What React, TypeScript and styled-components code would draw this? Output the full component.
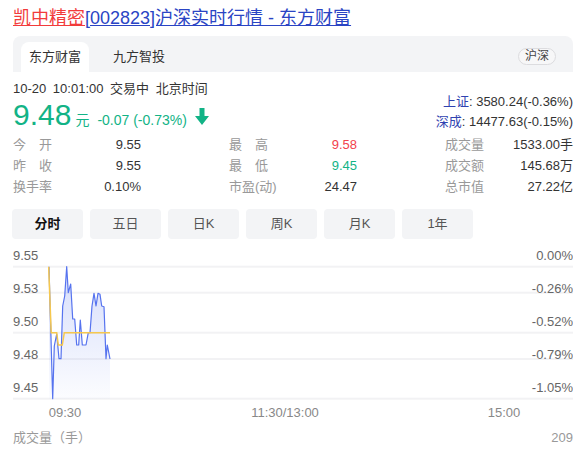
import { Fragment } from "react";
import styled, { createGlobalStyle } from "styled-components";

const GlobalStyle = createGlobalStyle`
  html, body {
    margin: 0;
    padding: 0;
    background: #fff;
  }
  body {
    font-family: "Liberation Sans", "Noto Sans CJK SC", sans-serif;
    color: #333;
  }
`;

const GREEN = "#12b386";
const RED = "#f2424c";

const Page = styled.div`
  width: 588px;
  height: 450px;
  box-sizing: border-box;
  padding: 6px 15px 0 13px;
  overflow: hidden;
`;

const Title = styled.div`
  font-size: 18px;
  line-height: 24px;
  white-space: nowrap;
`;

const TitleLink = styled.a<{ $color: string }>`
  color: ${({ $color }) => $color};
  text-decoration: underline;
`;

const TabPanel = styled.div`
  margin-top: 6px;
  height: 36px;
  background: #f3f4f6;
  border-radius: 8px 8px 0 0;
  display: flex;
  align-items: flex-end;
  padding: 0 17px 0 8px;
  gap: 16px;
`;

const SourceTab = styled.div<{ $active?: boolean }>`
  height: 30px;
  line-height: 30px;
  padding: 0 8px;
  font-size: 13px;
  color: #333;
  border-radius: 8px 8px 0 0;
  background: ${({ $active }) => ($active ? "#fff" : "transparent")};
`;

const Badge = styled.span`
  margin-left: auto;
  align-self: center;
  margin-top: 5px;
  height: 17px;
  line-height: 15px;
  box-sizing: border-box;
  padding: 0 6px;
  font-size: 12px;
  color: #444;
  border: 1px solid #dcdcdf;
  border-radius: 9px;
  background: #f7f7f8;
`;

const QuoteTop = styled.div`
  margin-top: 9px;
  display: flex;
  justify-content: space-between;
`;

const QuoteLeft = styled.div`
  display: flex;
  flex-direction: column;
`;

const InfoLine = styled.div`
  font-size: 13px;
  line-height: 15px;
  color: #333;
  word-spacing: 3px;
`;

const PriceRow = styled.div`
  display: flex;
  align-items: baseline;
  height: 33px;
  margin-top: 2px;
  color: ${GREEN};
`;

const BigPrice = styled.span`
  font-size: 30px;
  line-height: 33px;
  margin-right: 4px;
`;

const Unit = styled.span`
  font-size: 14px;
  margin-right: 8px;
`;

const Change = styled.span`
  font-size: 14px;
  margin-right: 8px;
`;

const ArrowIcon = styled.svg`
  align-self: center;
  margin-top: 4px;
`;

const IndexCol = styled.div`
  align-self: flex-end;
  text-align: right;
  font-size: 13px;
  line-height: 20px;
  margin-bottom: -1px;
`;

const IndexName = styled.span`
  color: #2f42b0;
`;

const StatsGrid = styled.div`
  margin-top: 3px;
  display: grid;
  grid-template-columns: 128px 1fr 128px 1fr 128px;
  font-size: 13px;
  line-height: 21px;
`;

const StatCell = styled.div<{ $col: number }>`
  grid-column: ${({ $col }) => $col};
  display: flex;
  justify-content: space-between;
`;

const StatLabel = styled.span`
  color: #999;
`;

const StatValue = styled.span<{ $color?: string }>`
  color: ${({ $color }) => $color || "#333"};
`;

const PeriodBar = styled.div`
  margin: 12px 0 0 -1px;
  display: flex;
  gap: 7px;
`;

const PeriodTab = styled.div<{ $active?: boolean }>`
  width: 71px;
  height: 30px;
  line-height: 30px;
  text-align: center;
  font-size: 13px;
  border-radius: 4px;
  background: #f3f4f6;
  color: ${({ $active }) => ($active ? "#111" : "#555")};
  font-weight: ${({ $active }) => ($active ? 700 : 400)};
`;

const Chart = styled.svg`
  display: block;
  margin-top: 2px;
  font-family: "Liberation Sans", sans-serif;
  font-size: 13px;
`;

const VolumeRow = styled.div`
  margin-top: 8px;
  display: flex;
  justify-content: space-between;
  font-size: 13px;
  line-height: 18px;
  color: #999;
`;

type Stat = { label: string; value: string; color?: string };

const stats: Stat[][] = [
  [
    { label: "今　开", value: "9.55" },
    { label: "最　高", value: "9.58", color: RED },
    { label: "成交量", value: "1533.00手" },
  ],
  [
    { label: "昨　收", value: "9.55" },
    { label: "最　低", value: "9.45", color: GREEN },
    { label: "成交额", value: "145.68万" },
  ],
  [
    { label: "换手率", value: "0.10%" },
    { label: "市盈(动)", value: "24.47" },
    { label: "总市值", value: "27.22亿" },
  ],
];

const periods = ["分时", "五日", "日K", "周K", "月K", "1年"];

const gridY = [25.7, 51.7, 91.7, 118, 157.7];
const labelY = [18.7, 51.7, 84.7, 117.7, 150.7];
const leftLabels = ["9.55", "9.53", "9.50", "9.48", "9.45"];
const rightLabels = ["0.00%", "-0.26%", "-0.52%", "-0.79%", "-1.05%"];

const pricePts: [number, number][] = [
  [36, 25.7], [39.7, 157.7], [41.3, 105], [43.7, 93], [46, 117.7], [48, 117.7],
  [49.7, 65], [51.7, 55], [53.7, 25.7], [55.3, 51.7], [57.7, 43], [59.7, 78],
  [61.7, 78], [63.7, 104], [65.7, 104], [67.3, 79], [69.3, 104], [73, 104],
  [75.3, 91.7], [77, 91.7], [79, 65], [81, 52.3], [83, 65], [85, 52.3],
  [87, 53.3], [88.7, 65], [91, 65.7], [93, 117.7], [94.3, 104], [97, 118],
];

const avgPts: [number, number][] = [
  [35.7, 25.7], [36.2, 40], [38.2, 91.7], [43.7, 91.7], [45.3, 104], [49.3, 104], [51.3, 91.7], [97, 91.7],
];

const toLine = (pts: [number, number][]) => pts.map(([x, y]) => `${x},${y}`).join(" ");

const PriceChart = () => {
  const areaPath =
    "M" + pricePts.map(([x, y]) => `${x} ${y}`).join(" L") + " L97 158 L36 158 Z";
  return (
    <Chart width="560" height="180" viewBox="0 0 560 180">
      <defs>
        <linearGradient id="area" x1="0" y1="0" x2="0" y2="1">
          <stop offset="0%" stopColor="#5a78ee" stopOpacity="0.25" />
          <stop offset="100%" stopColor="#5a78ee" stopOpacity="0.02" />
        </linearGradient>
      </defs>
      {gridY.map((y) => (
        <rect key={y} x="0" y={y - 1} width="560" height="2" fill="#f2f2f4" />
      ))}
      {leftLabels.map((t, i) => (
        <text key={t} x="0" y={labelY[i]} fill="#666">
          {t}
        </text>
      ))}
      {rightLabels.map((t, i) => (
        <text key={t} x="560" y={labelY[i]} fill="#666" textAnchor="end">
          {t}
        </text>
      ))}
      <path d={areaPath} fill="url(#area)" />
      <polyline points={toLine(pricePts)} fill="none" stroke="#5673ef" strokeWidth="1.2" strokeLinejoin="round" />
      <polyline points={toLine(avgPts)} fill="none" stroke="#f6c84e" strokeWidth="1.5" />
      <text x="52" y="176.4" fill="#888" textAnchor="middle">09:30</text>
      <text x="272" y="176.4" fill="#888" textAnchor="middle">11:30/13:00</text>
      <text x="491" y="176.4" fill="#888" textAnchor="middle">15:00</text>
    </Chart>
  );
};

const App = () => (
  <>
    <GlobalStyle />
    <Page>
      <Title>
        <TitleLink $color="#f23b3b" href="#">凯中精密</TitleLink>
        <TitleLink $color="#2a44c4" href="#">[002823]沪深实时行情 - 东方财富</TitleLink>
      </Title>
      <TabPanel>
        <SourceTab $active>东方财富</SourceTab>
        <SourceTab>九方智投</SourceTab>
        <Badge>沪深</Badge>
      </TabPanel>
      <QuoteTop>
        <QuoteLeft>
          <InfoLine>10-20 10:01:00 交易中 北京时间</InfoLine>
          <PriceRow>
            <BigPrice>9.48</BigPrice>
            <Unit>元</Unit>
            <Change>-0.07 (-0.73%)</Change>
            <ArrowIcon width="14" height="17" viewBox="0 0 14 17">
              <path d="M4.5 0 H9.5 V8 H14 L7 17 L0 8 H4.5 Z" fill={GREEN} />
            </ArrowIcon>
          </PriceRow>
        </QuoteLeft>
        <IndexCol>
          <div>
            <IndexName>上证</IndexName>: 3580.24(-0.36%)
          </div>
          <div>
            <IndexName>深成</IndexName>: 14477.63(-0.15%)
          </div>
        </IndexCol>
      </QuoteTop>
      <StatsGrid>
        {stats.map((row, r) => (
          <Fragment key={r}>
            {row.map((s, c) => (
              <StatCell key={s.label} $col={c * 2 + 1}>
                <StatLabel>{s.label}</StatLabel>
                <StatValue $color={s.color}>{s.value}</StatValue>
              </StatCell>
            ))}
          </Fragment>
        ))}
      </StatsGrid>
      <PeriodBar>
        {periods.map((p, i) => (
          <PeriodTab key={p} $active={i === 0}>
            {p}
          </PeriodTab>
        ))}
      </PeriodBar>
      <PriceChart />
      <VolumeRow>
        <span>成交量（手）</span>
        <span>209</span>
      </VolumeRow>
    </Page>
  </>
);

export default App;
